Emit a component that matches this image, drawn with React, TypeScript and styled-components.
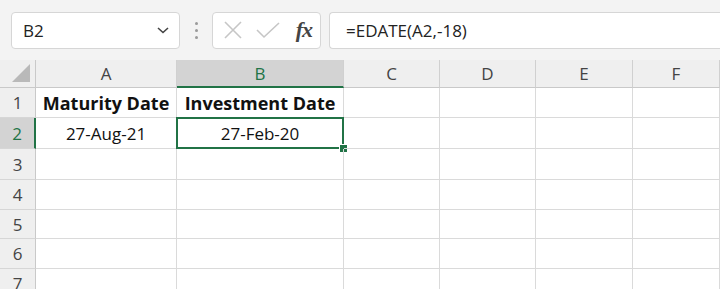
import React from 'react'
import styled, { createGlobalStyle, css } from 'styled-components'

const GlobalStyle = createGlobalStyle`
  html, body {
    margin: 0;
    padding: 0;
    background: #f3f3f3;
    font-family: 'Open Sans', 'Liberation Sans', sans-serif;
    overflow: hidden;
  }
`

const green = '#217346'
const gridLine = '#dadada'

const columns = ['A', 'B', 'C', 'D', 'E', 'F']
const colWidths = '36px 141px 167px 96px 96px 97px 1fr'
const rowHeights = [30, 31, 31, 30, 29, 30, 30]

const data: Record<string, { text: string; bold?: boolean }> = {
  A1: { text: 'Maturity Date', bold: true },
  B1: { text: 'Investment Date', bold: true },
  A2: { text: '27-Aug-21' },
  B2: { text: '27-Feb-20' }
}

function App() {
  return (
    <Page>
      <GlobalStyle />
      <Toolbar>
        <NameBox>
          <span>B2</span>
          <svg width="14" height="10" viewBox="0 0 14 10">
            <path d="M2 3 L7 7.5 L12 3" fill="none" stroke="#444" strokeWidth="1.6" />
          </svg>
        </NameBox>
        <Dots>
          <i />
          <i />
          <i />
        </Dots>
        <IconBox>
          <svg width="20" height="20" viewBox="0 0 20 20">
            <path d="M2 2 L18 18 M18 2 L2 18" stroke="#c6c6c6" strokeWidth="1.6" fill="none" />
          </svg>
          <svg width="24" height="20" viewBox="0 0 24 20">
            <path d="M1 10 L8 17 L23 3" stroke="#c6c6c6" strokeWidth="1.6" fill="none" />
          </svg>
          <Fx>fx</Fx>
        </IconBox>
        <FormulaBox>=EDATE(A2,-18)</FormulaBox>
      </Toolbar>
      <Sheet>
        <Corner>
          <svg width="22" height="22" viewBox="0 0 22 22">
            <path d="M20 2 L20 20 L2 20 Z" fill="#b9b9b9" />
          </svg>
        </Corner>
        {columns.map(c => (
          <ColHeader key={c} active={c === 'B'}>
            {c}
          </ColHeader>
        ))}
        {rowHeights.map((h, i) => {
          const row = i + 1
          return (
            <React.Fragment key={row}>
              <RowHeader active={row === 2} style={{ height: h }}>
                {row}
              </RowHeader>
              {columns.map(c => {
                const cell = data[c + row]
                return (
                  <Cell
                    key={c + row}
                    bold={cell?.bold}
                    selected={c + row === 'B2'}
                    style={{ height: h }}
                  >
                    {cell?.text}
                  </Cell>
                )
              })}
            </React.Fragment>
          )
        })}
      </Sheet>
    </Page>
  )
}

const Page = styled.div`
  width: 720px;
  height: 289px;
  overflow: hidden;
  background: #f3f3f3;
`

const Toolbar = styled.div`
  display: flex;
  align-items: center;
  height: 60px;
  padding: 0 0 0 11px;
  box-sizing: border-box;
`

const Box = styled.div`
  height: 37px;
  box-sizing: border-box;
  background: #fff;
  border: 1px solid #d6d6d6;
  border-radius: 4px;
  display: flex;
  align-items: center;
`

const NameBox = styled(Box)`
  width: 169px;
  padding: 0 9px 0 11px;
  justify-content: space-between;
  font-size: 17px;
  color: #222;
`

const Dots = styled.div`
  width: 32px;
  display: flex;
  flex-direction: column;
  align-items: center;
  gap: 4px;

  i {
    width: 3px;
    height: 3px;
    border-radius: 50%;
    background: #9a9a9a;
  }
`

const IconBox = styled(Box)`
  width: 109px;
  padding: 0 8px 0 10px;
  gap: 13px;
`

const Fx = styled.span`
  font-family: 'Liberation Serif', serif;
  font-style: italic;
  font-weight: bold;
  font-size: 22px;
  color: #444;
  margin-left: auto;
  letter-spacing: -1px;
  line-height: 1;
`

const FormulaBox = styled(Box)`
  flex: 1;
  margin-left: 8px;
  padding-left: 16px;
  border-right: none;
  border-radius: 4px 0 0 4px;
  font-size: 17px;
  color: #222;
`

const Sheet = styled.div`
  display: grid;
  grid-template-columns: ${colWidths};
  background: #fff;
`

const headerBase = css`
  background: #efefef;
  box-sizing: border-box;
  display: flex;
  align-items: center;
  justify-content: center;
  font-size: 17px;
  color: #444;
`

const Corner = styled.div`
  ${headerBase};
  height: 28px;
  border-right: 1px solid #c9c9c9;
  border-bottom: 1px solid #c9c9c9;
  align-items: flex-end;
  justify-content: flex-end;
  padding: 0 3px 3px 0;
`

const ColHeader = styled.div<{ active?: boolean }>`
  ${headerBase};
  height: 28px;
  border-right: 1px solid #d0d0d0;
  border-bottom: 1px solid #c9c9c9;
  ${p =>
    p.active &&
    css`
      background: #d3d3d3;
      color: ${green};
      border-bottom: 2px solid ${green};
    `}
`

const RowHeader = styled.div<{ active?: boolean }>`
  ${headerBase};
  border-right: 1px solid #c9c9c9;
  border-bottom: 1px solid #d6d6d6;
  ${p =>
    p.active &&
    css`
      background: #d3d3d3;
      color: ${green};
      border-right: 2px solid ${green};
    `}
`

const Cell = styled.div<{ bold?: boolean; selected?: boolean }>`
  position: relative;
  box-sizing: border-box;
  border-right: 1px solid ${gridLine};
  border-bottom: 1px solid ${gridLine};
  display: flex;
  align-items: center;
  justify-content: center;
  font-size: ${p => (p.bold ? 18 : 17)}px;
  color: #111;
  white-space: nowrap;
  font-weight: ${p => (p.bold ? 700 : 400)};
  ${p =>
    p.selected &&
    css`
      &::before {
        content: '';
        position: absolute;
        left: -1px;
        top: -1px;
        right: -1px;
        bottom: -1px;
        border: 2px solid ${green};
      }
      &::after {
        content: '';
        position: absolute;
        right: -5px;
        bottom: -5px;
        width: 7px;
        height: 7px;
        background: ${green};
        border: 1px solid #fff;
      }
    `}
`

export default App
